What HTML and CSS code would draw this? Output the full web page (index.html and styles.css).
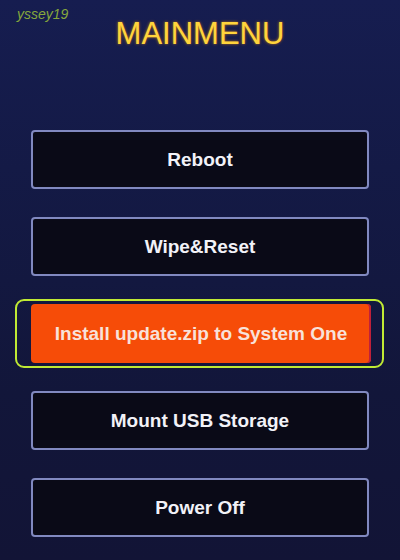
FILE: index.html
```html
<!DOCTYPE html>
<html lang="en">
<head>
<meta charset="utf-8">
<title>MAINMENU</title>
<link rel="stylesheet" href="styles.css">
</head>
<body>
<div class="screen">
  <span class="mark">yssey19</span>
  <h1 class="title">MAINMENU</h1>
  <ul class="menu">
    <li class="item">Reboot</li>
    <li class="item">Wipe&amp;Reset</li>
    <li class="item active">Install update.zip to System One</li>
    <li class="item">Mount USB Storage</li>
    <li class="item">Power Off</li>
  </ul>
</div>
</body>
</html>
```

FILE: styles.css
```css
body { margin: 0; background: #111338; }
.screen {
  position: relative;
  width: 400px;
  height: 560px;
  overflow: hidden;
  background: linear-gradient(180deg, #161d50 0%, #141a46 30%, #12163a 70%, #121436 100%);
  font-family: "Liberation Sans", Arial, sans-serif;
}
.mark {
  position: absolute;
  left: 17px;
  top: 6px;
  font-size: 14px;
  font-style: italic;
  color: #86a83c;
}
.title {
  margin: 0;
  padding-top: 18px;
  font-size: 31px;
  font-weight: normal;
  line-height: 31px;
  text-align: center;
  color: #ffd43c;
  text-shadow: 0 0 3px rgba(255, 150, 0, .7);
}
.menu {
  list-style: none;
  margin: 0;
  padding: 81px 0 0 31px;
  display: flex;
  flex-direction: column;
  gap: 28px;
}
.item {
  position: relative;
  box-sizing: border-box;
  width: 338px;
  height: 59px;
  display: flex;
  align-items: center;
  justify-content: center;
  border: 2px solid #8189c0;
  border-radius: 4px;
  background: #0a0a17;
  color: #f2f2f8;
  font-size: 19px;
  font-weight: bold;
}
.item.active {
  width: 340px;
  border: none;
  background: #f64c08;
  box-shadow: inset -2px 0 0 #c0203a;
  color: #f8e2da;
}
.item.active::before {
  content: "";
  position: absolute;
  top: -5px;
  bottom: -5px;
  left: -16px;
  right: -13px;
  border: 2px solid #c0ea34;
  border-radius: 9px;
}
```
